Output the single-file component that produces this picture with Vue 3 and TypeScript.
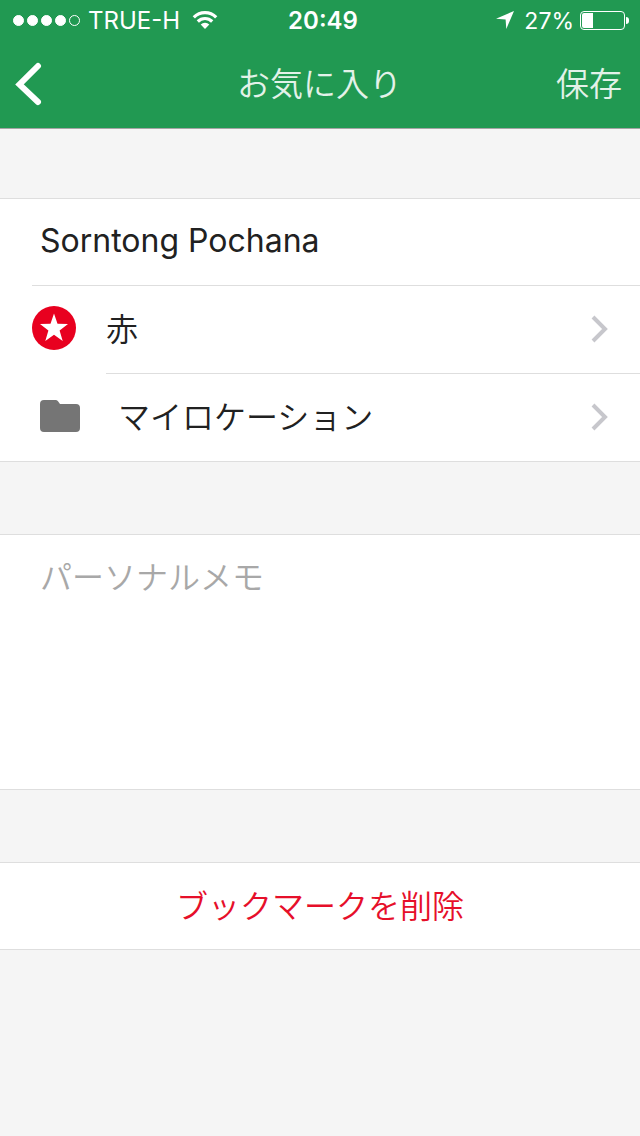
<script setup lang="ts">
import { ref } from 'vue'

interface SettingRow {
  id: 'color' | 'folder'
  label: string
}

const rows: SettingRow[] = [
  { id: 'color', label: '赤' },
  { id: 'folder', label: 'マイロケーション' },
]

const name = ref('Sorntong Pochana')
const memo = ref('')
const battery = ref(27)
const signalDots = 5
const signalLevel = 4
</script>

<template>
  <div class="screen">
    <header class="header">
      <div class="status">
        <div class="status-left">
          <span class="signal" aria-hidden="true">
            <i v-for="n in signalDots" :key="n" class="dot" :class="{ empty: n > signalLevel }"></i>
          </span>
          <span class="status-text">TRUE-H</span>
          <svg class="wifi" width="26" height="20" viewBox="0 0 26 20" aria-hidden="true">
            <g fill="none" stroke="#fff" stroke-width="3.200">
              <path d="M1.800 7.300a15.800 15.800 0 0 1 22.400 0" />
              <path d="M5.800 11.500a10.200 10.200 0 0 1 14.400 0" />
            </g>
            <path d="M8.700 14.600a6.100 6.100 0 0 1 8.600 0L13 19z" fill="#fff" />
          </svg>
        </div>
        <time class="clock status-text">20:49</time>
        <div class="status-right">
          <svg class="location" width="18" height="18" viewBox="0 0 18 18" aria-hidden="true">
            <path d="M18 0L10.300 18L9.600 8.400L0 7.700z" fill="#fff" />
          </svg>
          <span class="percent status-text">{{ battery }}%</span>
          <span class="battery" aria-hidden="true">
            <span class="battery-body"><span class="battery-fill" :style="{ width: battery + '%' }"></span></span>
            <span class="battery-tip"></span>
          </span>
        </div>
      </div>
      <nav class="nav">
        <button class="back" type="button" aria-label="戻る">
          <svg width="28" height="44" viewBox="0 0 28 44" aria-hidden="true">
            <path d="M23 4L4.500 22.500L23 40" fill="none" stroke="#fff" stroke-width="6" stroke-linecap="round" stroke-linejoin="miter" />
          </svg>
        </button>
        <h1 class="title">お気に入り</h1>
        <button class="save" type="button">保存</button>
      </nav>
    </header>

    <main class="content">
      <section class="group">
        <input v-model="name" class="name" type="text" aria-label="名前" />
        <button v-for="row in rows" :key="row.id" class="row" :class="row.id" type="button">
          <svg v-if="row.id === 'color'" class="icon" width="44" height="44" viewBox="0 0 44 44" aria-hidden="true">
            <circle cx="22" cy="22" r="22" fill="#e8001f" />
            <path d="M22 7.500L25.500 17.800L36 18L27.600 24.500L30.700 35L22 28.800L13.300 35L16.400 24.500L8 18L18.500 17.800z" fill="#fff" />
          </svg>
          <svg v-else class="icon" width="40" height="32" viewBox="0 0 40 32" aria-hidden="true">
            <path d="M4 0H15.500Q17 0 18 1.200L20 4H36Q40 4 40 8V28Q40 32 36 32H4Q0 32 0 28V4Q0 0 4 0z" fill="#757575" />
          </svg>
          <span class="row-label">{{ row.label }}</span>
          <svg width="17" height="28" viewBox="0 0 17 28" aria-hidden="true">
            <path d="M2 2L14 14L2 26" fill="none" stroke="#c7c7cc" stroke-width="4" />
          </svg>
        </button>
      </section>

      <section class="group">
        <textarea v-model="memo" class="memo" placeholder="パーソナルメモ" aria-label="パーソナルメモ"></textarea>
      </section>

      <section class="group">
        <button class="delete" type="button">ブックマークを削除</button>
      </section>
    </main>
  </div>
</template>

<style>
body {
  margin: 0;
  background: #f5f5f5;
}
</style>

<style scoped>
.screen {
  min-height: 100vh;
  background: #f5f5f5;
  color: #212121;
  font-family: Inter, "Noto Sans CJK JP", sans-serif;
  font-size: 32px;
}

button,
input,
textarea {
  display: block;
  box-sizing: border-box;
  margin: 0;
  padding: 0;
  border: 0;
  border-radius: 0;
  outline: 0;
  background: none;
  color: inherit;
  font: inherit;
}

button {
  cursor: pointer;
}

svg {
  display: block;
  flex: none;
}

.header {
  border-bottom: 1px solid #a5a5a5;
  background: #219952;
  color: #fff;
}

.status {
  display: grid;
  grid-template-columns: 1fr auto 1fr;
  align-items: center;
  height: 40px;
  padding: 0 11px 0 13px;
  font-size: 24px;
  line-height: 36px;
}

.status-left,
.status-right {
  display: flex;
  align-items: center;
  height: 40px;
}

.status-left {
  gap: 8px;
}

.status-right {
  justify-content: flex-end;
}

.status-text {
  padding-top: 2px;
}

.signal {
  display: flex;
  gap: 3px;
}

.dot {
  box-sizing: border-box;
  width: 11px;
  height: 11px;
  border: 1px solid #fff;
  border-radius: 50%;
  background: #fff;
}

.dot.empty {
  background: none;
}

.wifi {
  margin-left: 4px;
}

.clock {
  padding-left: 4px;
  font-weight: 600;
}

.percent {
  font-size: 23px;
}

.location {
  margin-right: 10px;
}

.battery {
  display: flex;
  align-items: center;
  gap: 1px;
  margin-left: 6px;
}

.battery-body {
  display: flex;
  box-sizing: border-box;
  width: 45px;
  height: 19px;
  padding: 1px;
  border: 1px solid #fff;
  border-radius: 4px;
}

.battery-fill {
  border-radius: 2px 0 0 2px;
  background: #fff;
}

.battery-tip {
  width: 3px;
  height: 7px;
  border-radius: 0 3px 3px 0;
  background: #fff;
}

.nav {
  display: grid;
  grid-template-columns: 1fr auto 1fr;
  align-items: center;
  height: 88px;
  padding: 0 18px 0 15px;
}

.back {
  justify-self: start;
}

.title,
.save {
  margin: 0;
  color: #e3f2e9;
  font-size: 33px;
  font-weight: 350;
  line-height: 48px;
}

.title {
  padding-left: 2px;
}

.save {
  justify-self: end;
}

.content {
  display: flex;
  flex-direction: column;
  gap: 72px;
  padding-top: 69px;
}

.group {
  border-top: 1px solid #dedede;
  border-bottom: 1px solid #dedede;
  background: #fff;
}

.name {
  width: 100%;
  height: 86px;
  padding: 0 40px 4px;
}

.row {
  position: relative;
  display: flex;
  align-items: center;
  width: 100%;
  height: 88px;
  padding: 0 32px;
  font-weight: 350;
  text-align: left;
}

.row::before {
  position: absolute;
  top: 0;
  right: 0;
  left: 32px;
  height: 1px;
  background: #dedede;
  content: "";
}

.row.folder {
  padding-left: 40px;
}

.row.folder::before {
  left: 106px;
}

.icon {
  margin-bottom: 2px;
}

.row-label {
  flex: 1;
  margin-left: 30px;
  padding-bottom: 4px;
}

.folder .row-label {
  margin-left: 38px;
}

.memo {
  width: 100%;
  height: 254px;
  padding: 19px 40px;
  font-weight: 350;
  line-height: 48px;
  resize: none;
}

.memo::placeholder {
  color: #a8a8a8;
  opacity: 1;
}

.delete {
  width: 100%;
  height: 86px;
  padding-bottom: 4px;
  color: #e60f2a;
  font-weight: 350;
  text-align: center;
}
</style>
